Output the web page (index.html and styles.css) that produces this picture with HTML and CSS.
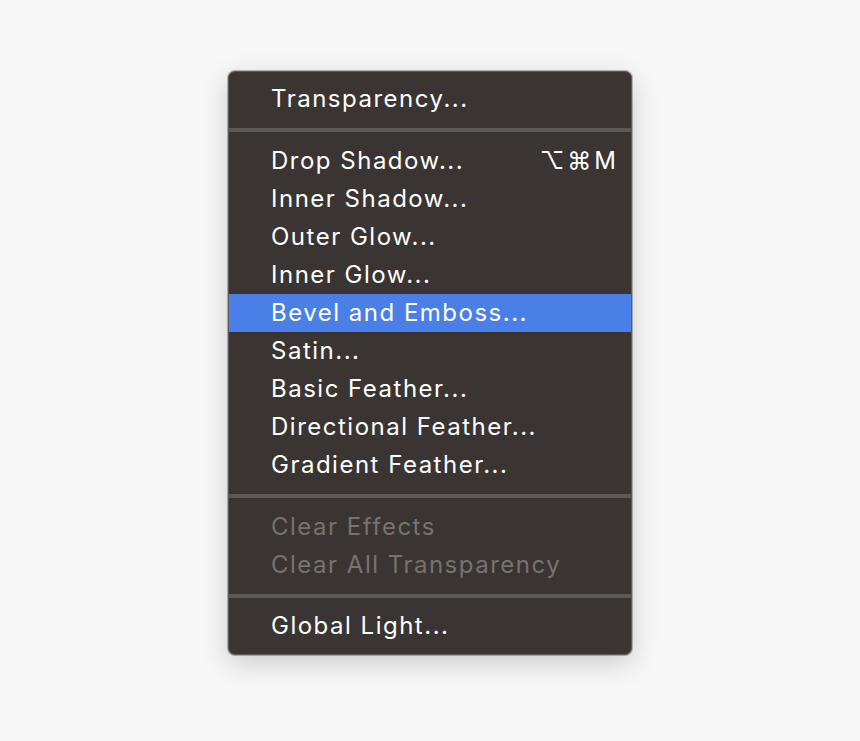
FILE: index.html
```html
<!DOCTYPE html>
<html>
<head>
<meta charset="utf-8">
<link rel="stylesheet" href="styles.css">
</head>
<body>
<div class="stage">
  <div class="menu">
    <div class="item">Transparency...</div>
    <div class="sep"></div>
    <div class="item"><span>Drop Shadow...</span><span class="key">⌥⌘M</span></div>
    <div class="item">Inner Shadow...</div>
    <div class="item">Outer Glow...</div>
    <div class="item">Inner Glow...</div>
    <div class="item active">Bevel and Emboss...</div>
    <div class="item">Satin...</div>
    <div class="item">Basic Feather...</div>
    <div class="item">Directional Feather...</div>
    <div class="item">Gradient Feather...</div>
    <div class="sep"></div>
    <div class="item disabled">Clear Effects</div>
    <div class="item disabled">Clear All Transparency</div>
    <div class="sep last"></div>
    <div class="item">Global Light...</div>
  </div>
</div>
</body>
</html>
```
FILE: styles.css
```css
html, body {
  margin: 0;
  padding: 0;
  background: #f7f7f7;
  width: 860px;
  height: 741px;
  overflow: hidden;
}
.stage {
  padding-top: 71px;
  padding-left: 228px;
}
.menu {
  width: 404px;
  box-sizing: border-box;
  background: #3a3532;
  border: 1px solid #5e5a57;
  border-radius: 7px;
  padding: 8px 0 9px;
  box-shadow: 0 0 0 1px rgba(0,0,0,0.25), 0 8px 28px rgba(0,0,0,0.18);
  font-family: Inter, "Noto Sans", sans-serif;
  font-size: 24px;
  letter-spacing: 1.5px;
  color: #ffffff;
}
.item {
  height: 38px;
  line-height: 38px;
  padding: 0 12px 0 42px;
  display: flex;
  justify-content: space-between;
  white-space: nowrap;
}
.item.active {
  background: #4a7fe7;
}
.item.disabled {
  color: #77726f;
}
.key {
  letter-spacing: 3px;
}
.sep {
  height: 4px;
  background: #5d5956;
  margin: 10px 0 10px;
}
.sep.last {
  margin-bottom: 9px;
}
```
